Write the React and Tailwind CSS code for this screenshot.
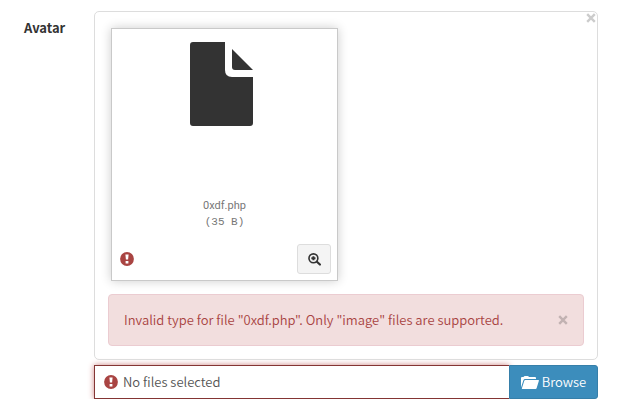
const ErrorIcon = () => (
  <svg viewBox="0 0 14 14" className="w-[14px] h-[14px] shrink-0" aria-hidden="true">
    <circle cx="7" cy="7" r="6.9" fill="#a94442" />
    <path d="M5.4 2.6h3.2l-.5 5H5.9zM5.6 9h2.8v2.4H5.6z" fill="#fff" />
  </svg>
);

const FileIcon = () => (
  <svg viewBox="0 0 63 84" className="w-[63px] h-[84px]" fill="#333" aria-hidden="true">
    <path d="M3 0H35V28Q35 35 42 35H63V81Q63 84 60 84H3Q0 84 0 81V3Q0 0 3 0Z" />
    <path d="M42 7L63 28H45Q42 28 42 25Z" />
  </svg>
);

const ZoomIcon = () => (
  <svg viewBox="0 0 12 12" className="w-[13px] h-[13px]" fill="none" stroke="#333" aria-hidden="true">
    <circle cx="5" cy="4.9" r="4.1" strokeWidth="1.5" />
    <path d="M8.2 8l2.8 2.7" strokeWidth="2" strokeLinecap="round" />
    <path d="M5 3v3.8M3.1 4.9h3.8" strokeWidth="1.8" />
  </svg>
);

const FolderIcon = () => (
  <svg viewBox="0 0 18 13" className="w-[18px] h-[13px] shrink-0" fill="#fff" aria-hidden="true">
    <path d="M0 11.5V2Q0 1 1 1H2.5Q3 0 4 0H6.5Q7.5 0 8 1H14Q15 1 15 2V3H4Q3 3 2.5 4Z" />
    <path d="M4.3 4H17.5Q18.1 4 17.9 4.7L15.6 12.2Q15.3 13 14.6 13H1.3Q.6 13 .9 12.2L3.3 4.7Q3.6 4 4.3 4Z" />
  </svg>
);

const CloseIcon = () => (
  <svg viewBox="0 0 10 10" className="w-[10px] h-[10px]" stroke="currentColor" strokeWidth="2.4" aria-hidden="true">
    <path d="M1.2 1.2l7.6 7.6M8.8 1.2L1.2 8.8" />
  </svg>
);

const Thumbnail = ({ name, size }) => (
  <figure className="w-[227px] max-w-full bg-white border border-[#c9c9c9] shadow-[0_0_10px_rgba(0,0,0,0.2)]">
    <div className="flex h-[160px] justify-center pt-[13px] pr-[6px]">
      <FileIcon />
    </div>
    <figcaption className="h-[55px] pt-[9px] text-center text-[11px] font-normal leading-4 text-[#777]">
      <div className="font-[Roboto,sans-serif]">{name}</div>
      <div className="font-['Liberation_Mono',monospace]">({size})</div>
    </figcaption>
    <div className="flex items-center justify-between pl-2 pr-[6px] pb-[6px]">
      <ErrorIcon />
      <button
        type="button"
        aria-label="View details"
        className="flex items-center justify-center w-[34px] h-[30px] bg-[#f4f4f4] border border-[#ddd] rounded-[3px]"
      >
        <ZoomIcon />
      </button>
    </div>
  </figure>
);

const App = () => (
  <form className="flex pl-6 pr-[38px] pt-[11px] bg-white text-[13px] font-[350] leading-5 text-[#333] font-['Noto_Sans_CJK_SC',sans-serif]">
    <label htmlFor="avatar" className="w-[70px] shrink-0 pt-[7px] font-bold">Avatar</label>

    <div className="flex-1 min-w-0">
      {/* Preview area */}
      <div className="relative border border-[#ddd] rounded-[5px] px-[13px] pt-4 pb-[13px]">
        <button type="button" aria-label="Remove" className="absolute top-px right-px text-[#ccc]">
          <CloseIcon />
        </button>
        <div className="px-[3px]">
          <Thumbnail name="0xdf.php" size="35 B" />
        </div>
        <div
          role="alert"
          className="mt-[13px] flex items-center justify-between px-[15px] py-[15px] bg-[#f2dede] border border-[#ebccd1] rounded text-[#a94442]"
        >
          <p>Invalid type for file "0xdf.php". Only "image" files are supported.</p>
          <button type="button" aria-label="Close" className="text-[#c2b2b2]">
            <CloseIcon />
          </button>
        </div>
      </div>

      {/* File caption and browse button */}
      <div className="mt-[5px] flex h-[34px]">
        <div className="flex-1 min-w-0 flex items-center gap-[5px] pl-[9px] border border-r-0 border-[#843534] shadow-[0_0_6px_#ce8483]">
          <ErrorIcon />
          <input
            id="avatar"
            type="text"
            readOnly
            value="No files selected"
            className="flex-1 min-w-0 text-[#555] outline-none"
          />
        </div>
        <button
          type="button"
          className="relative flex items-center justify-center gap-[3px] w-[89px] bg-[#3c8dbc] border border-[#367fa9] rounded-r-[3px] text-white"
        >
          <FolderIcon />
          <span>Browse</span>
        </button>
      </div>
    </div>
  </form>
);

export default App;
